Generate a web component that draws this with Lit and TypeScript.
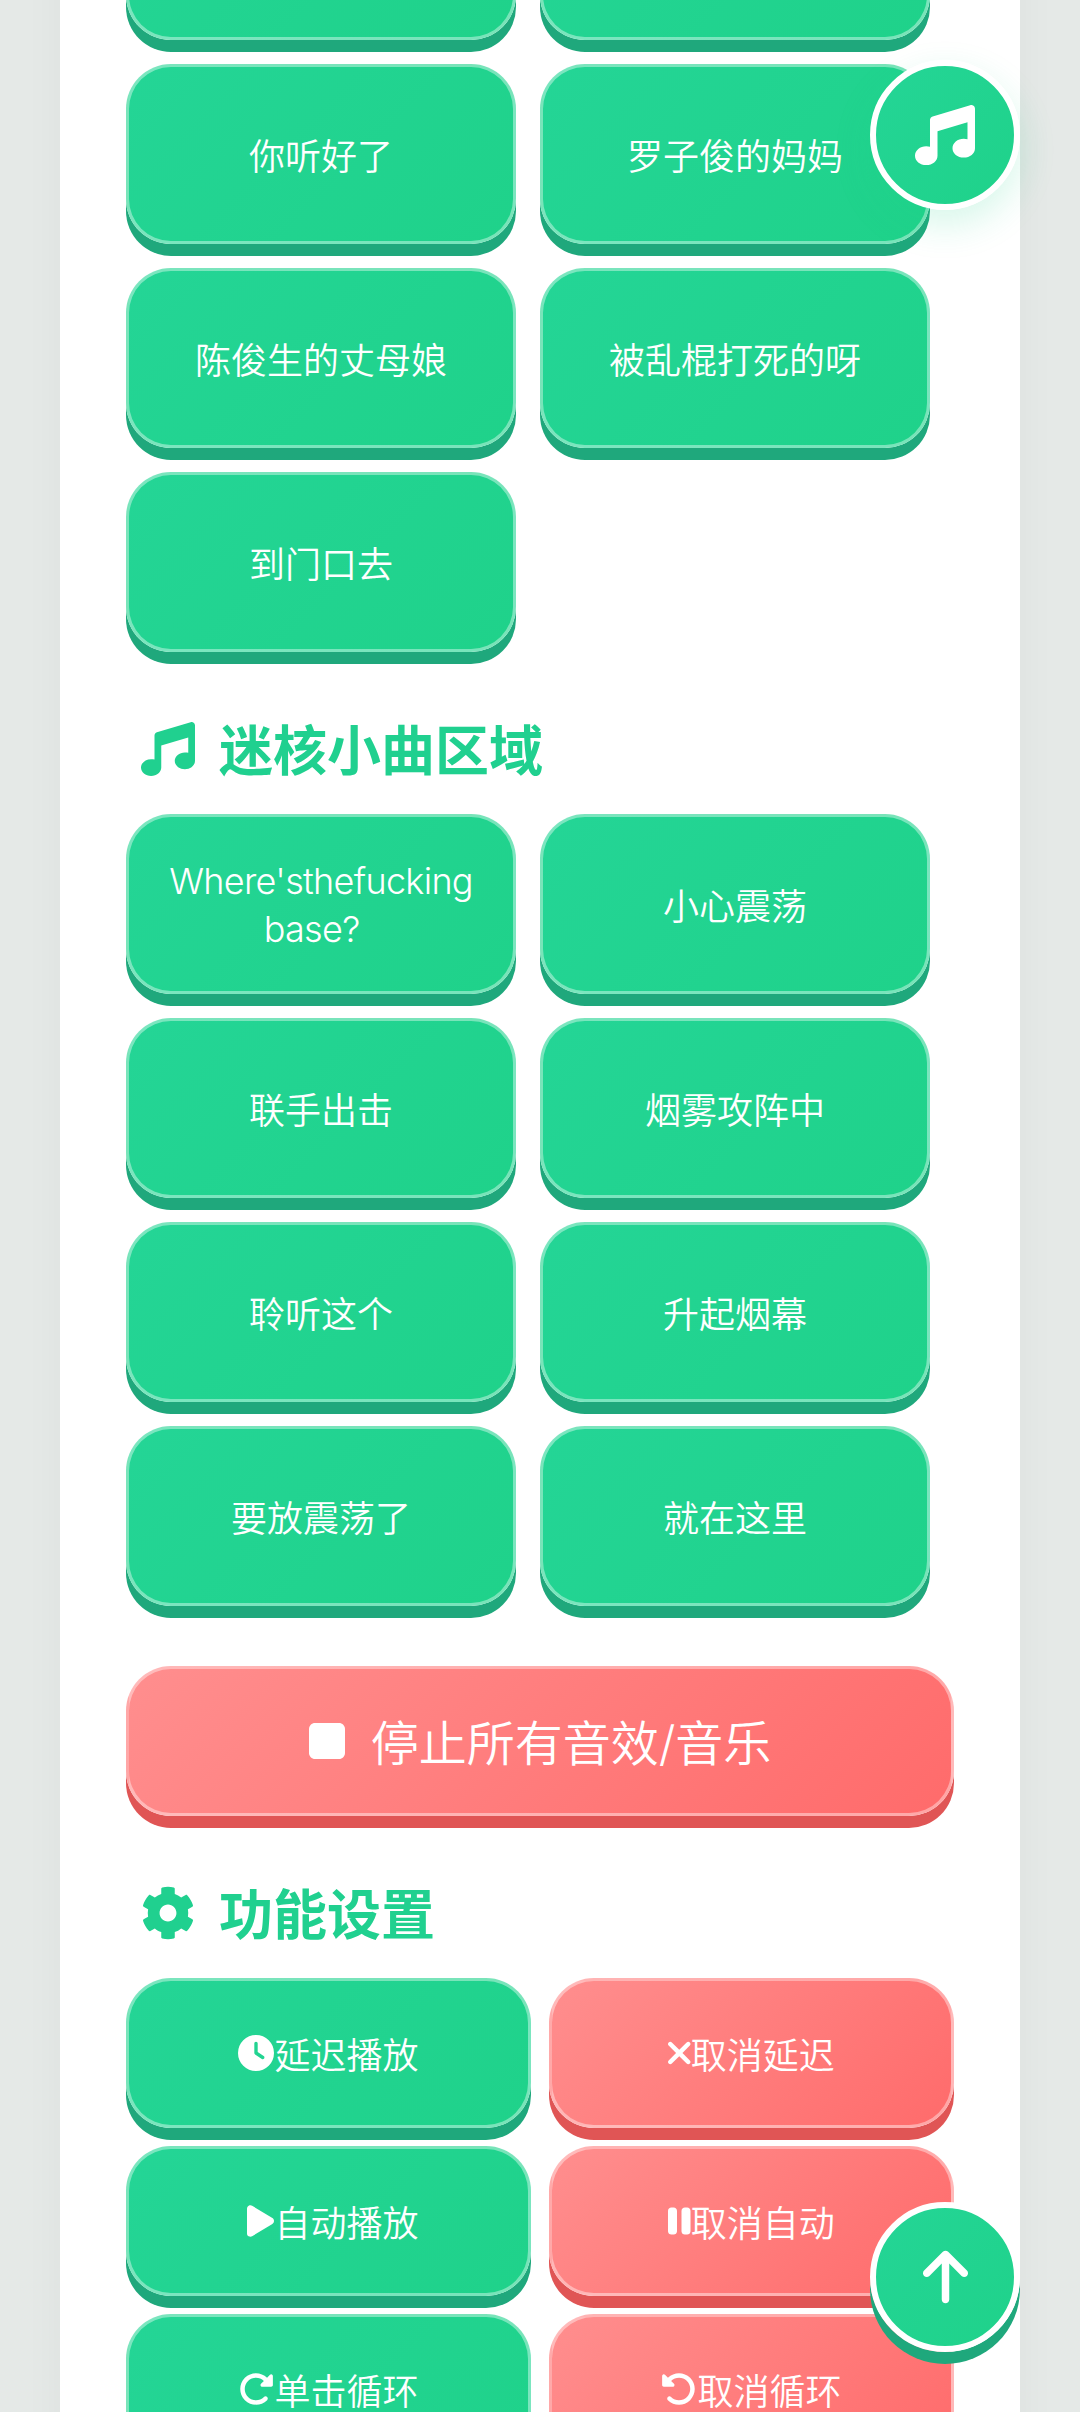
import { LitElement, html, css, svg } from "lit";
import { customElement } from "lit/decorators.js";

// font awesome 6 solid glyphs, [box width, path, box left]
const ICONS: Record<string, [number, string, number?]> = {
  music: [512, "M499.1 6.3c8.1 6 12.9 15.6 12.9 25.7v72V368c0 44.2-43 80-96 80s-96-35.8-96-80s43-80 96-80c11.2 0 22 1.6 32 4.6V147L192 223.8V432c0 44.2-43 80-96 80s-96-35.8-96-80s43-80 96-80c11.2 0 22 1.6 32 4.6V200 128c0-14.1 9.3-26.6 22.8-30.7l320-96c9.7-2.9 20.2-1.1 28.3 5z"],
  gear: [512, "M487.4 315.7l-42.6-24.6c4.3-23.2 4.3-47 0-70.2l42.6-24.6c4.9-2.8 7.1-8.6 5.5-14-11.1-35.6-30-67.8-54.7-94.6-3.8-4.1-10-5.1-14.8-2.3L380.8 110c-17.9-15.4-38.5-27.3-60.8-35.1V25.8c0-5.6-3.9-10.5-9.4-11.7-36.7-8.2-74.3-7.8-109.2 0-5.5 1.2-9.4 6.1-9.4 11.7V75c-22.2 7.9-42.8 19.8-60.8 35.1L88.7 85.5c-4.9-2.8-11-1.9-14.8 2.3-24.7 26.7-43.6 58.9-54.7 94.6-1.7 5.4.6 11.2 5.5 14L67.3 221c-4.3 23.2-4.3 47 0 70.2l-42.6 24.6c-4.9 2.8-7.1 8.6-5.5 14 11.1 35.6 30 67.8 54.7 94.6 3.8 4.1 10 5.1 14.8 2.3l42.6-24.6c17.9 15.4 38.5 27.3 60.8 35.1v49.2c0 5.6 3.9 10.5 9.4 11.7 36.7 8.2 74.3 7.8 109.2 0 5.5-1.2 9.4-6.1 9.4-11.7v-49.2c22.2-7.9 42.8-19.8 60.8-35.1l42.6 24.6c4.9 2.8 11 1.9 14.8-2.3 24.7-26.7 43.6-58.9 54.7-94.6 1.5-5.5-.7-11.3-5.6-14.1zM256 336c-44.1 0-80-35.9-80-80s35.9-80 80-80 80 35.9 80 80-35.9 80-80 80z"],
  stop: [384, "M0 128C0 92.7 28.7 64 64 64H320c35.3 0 64 28.7 64 64V384c0 35.3-28.7 64-64 64H64c-35.3 0-64-28.7-64-64V128z"],
  clock: [512, "M256 0a256 256 0 1 1 0 512A256 256 0 1 1 256 0zM232 120V256c0 8 4 15.5 10.7 20l96 64c11 7.4 25.9 4.4 33.3-6.7s4.4-25.9-6.7-33.3L280 243.2V120c0-13.3-10.7-24-24-24s-24 10.7-24 24z"],
  xmark: [320, "M310.6 150.6c12.5-12.5 12.5-32.8 0-45.3s-32.8-12.5-45.3 0L160 210.7 54.6 105.4c-12.5-12.5-32.8-12.5-45.3 0s-12.5 32.8 0 45.3L114.7 256 9.4 361.4c-12.5 12.5-12.5 32.8 0 45.3s32.8 12.5 45.3 0L160 301.3 265.4 406.6c12.5 12.5 32.8 12.5 45.3 0s12.5-32.8 0-45.3L205.3 256 310.6 150.6z"],
  play: [512, "M73 39c-14.8-9.1-33.4-9.4-48.5-.9S0 62.6 0 80V432c0 17.4 9.4 33.4 24.5 41.9s33.7 8.1 48.5-.9L361 297c14.3-8.7 23-24.2 23-41s-8.7-32.2-23-41L73 39z", -128],
  pause: [320, "M48 64C21.5 64 0 85.5 0 112V400c0 26.5 21.5 48 48 48H80c26.5 0 48-21.5 48-48V112c0-26.5-21.5-48-48-48H48zm192 0c-26.5 0-48 21.5-48 48V400c0 26.5 21.5 48 48 48h32c26.5 0 48-21.5 48-48V112c0-26.5-21.5-48-48-48H240z"],
  redo: [512, "M463.5 224H472c13.3 0 24-10.7 24-24V72c0-9.7-5.8-18.5-14.8-22.2s-19.3-1.7-26.2 5.2L413.4 96.6c-87.6-86.5-228.7-86.2-315.8 1c-87.5 87.5-87.5 229.3 0 316.8s229.3 87.5 316.8 0c12.5-12.5 12.5-32.8 0-45.3s-32.8-12.5-45.3 0c-62.5 62.5-163.8 62.5-226.3 0s-62.5-163.8 0-226.3c62.2-62.2 162.7-62.5 225.3-1L327 183c-6.9 6.9-8.9 17.2-5.2 26.2s12.5 14.8 22.2 14.8H463.5z"],
  undo: [512, "M48.5 224H40c-13.3 0-24-10.7-24-24V72c0-9.7 5.8-18.5 14.8-22.2s19.3-1.7 26.2 5.2L98.6 96.6c87.6-86.5 228.7-86.2 315.8 1c87.5 87.5 87.5 229.3 0 316.8s-229.3 87.5-316.8 0c-12.5-12.5-12.5-32.8 0-45.3s32.8-12.5 45.3 0c62.5 62.5 163.8 62.5 226.3 0s62.5-163.8 0-226.3c-62.2-62.2-162.7-62.5-225.3-1L185 183c6.9 6.9 8.9 17.2 5.2 26.2s-12.5 14.8-22.2 14.8H48.5z"],
  up: [384, "M214.6 41.4c-12.5-12.5-32.8-12.5-45.3 0l-160 160c-12.5 12.5-12.5 32.8 0 45.3s32.8 12.5 45.3 0L160 141.2V448c0 17.7 14.3 32 32 32s32-14.3 32-32V141.2L329.4 246.6c12.5 12.5 32.8 12.5 45.3 0s12.5-32.8 0-45.3l-160-160z"],
};

const icon = (name: string) => {
  const [w, d, x = 0] = ICONS[name];
  return html`<svg class="icon" viewBox="${x} 0 ${w} 512" style="width:${w / 512}em" fill="currentColor">${svg`<path d=${d}></path>`}</svg>`;
};

// the page is scrolled down, first row only shows its bottom edge
const SOUNDS = ["", "", "你听好了", "罗子俊的妈妈", "陈俊生的丈母娘", "被乱棍打死的呀", "到门口去"];
const SONGS = ["小心震荡", "联手出击", "烟雾攻阵中", "聆听这个", "升起烟幕", "要放震荡了", "就在这里"];
const SETTINGS: [string, string, boolean][] = [
  ["clock", "延迟播放", false],
  ["xmark", "取消延迟", true],
  ["play", "自动播放", false],
  ["pause", "取消自动", true],
  ["redo", "单击循环", false],
  ["undo", "取消循环", true],
];

@customElement("app-root")
export class AppRoot extends LitElement {
  static styles = css`
    :host {
      display: block;
      height: 2412px;
      overflow: hidden;
      background: #e5e9e7;
      font-family: Inter, "Noto Sans CJK SC", sans-serif;
    }
    .panel {
      margin: -140px 60px 0;
      padding: 0 66px 60px;
      background: #fff;
      box-shadow: 0 0 40px rgba(0, 40, 30, 0.04);
    }
    .icon {
      height: 1em;
      flex: none;
      display: block;
    }
    .grid {
      display: grid;
      grid-template-columns: 390px 390px;
      gap: 24px;
    }
    .settings {
      grid-template-columns: 405px 405px;
      gap: 18px;
    }
    .btn {
      display: flex;
      align-items: center;
      justify-content: center;
      box-sizing: border-box;
      height: 180px;
      padding: 0 24px;
      border: 3px solid rgba(255, 255, 255, 0.4);
      border-radius: 45px;
      color: #fff;
      font: inherit;
      font-size: 36px;
      font-weight: 350;
      line-height: 48px;
      text-align: center;
      background: linear-gradient(135deg, #24d596, #1fd28a);
      box-shadow: 0 12px 0 #1fa87c;
    }
    .label {
      padding-top: 6px;
    }
    .latin {
      padding-top: 2px;
      font-weight: 300;
      letter-spacing: -0.7px;
    }
    .settings .btn {
      height: 150px;
    }
    .red {
      background: linear-gradient(135deg, #ff8e8e, #ff6b6b);
      box-shadow: 0 12px 0 #e05555;
    }
    .stop {
      width: 100%;
      height: 150px;
      margin-top: 60px;
      gap: 26px;
      font-size: 48px;
    }
    h2 {
      display: flex;
      align-items: center;
      gap: 24px;
      height: 72px;
      margin: 60px 0 30px;
      padding-left: 15px;
      color: #20d08f;
      font-size: 54px;
      line-height: 72px;
      font-weight: 700;
    }
    h2 .icon {
      margin-top: 2px;
    }
    h2 .label {
      padding-top: 8px;
    }
    .fab {
      position: fixed;
      right: 60px;
      display: flex;
      align-items: center;
      justify-content: center;
      box-sizing: border-box;
      width: 150px;
      height: 150px;
      border: 6px solid #fff;
      border-radius: 50%;
      color: #fff;
      font-size: 60px;
      background: linear-gradient(135deg, #24d596, #1fd28a);
    }
    .fab.music {
      top: 60px;
      box-shadow: 0 15px 36px rgba(32, 210, 140, 0.18);
    }
    .fab.top {
      bottom: 60px;
      box-shadow: 0 12px 0 #1fa87c;
    }
  `;

  render() {
    return html`
      <div class="panel">
        <div class="grid">
          ${SOUNDS.map((s) => html`<button class="btn"><span class="label">${s}</span></button>`)}
        </div>

        <h2>${icon("music")}<span class="label">迷核小曲区域</span></h2>
        <div class="grid">
          <button class="btn"><span class="label latin">Where's\u200bthe\u200bfucking base?\u00a0\u00a0</span></button>
          ${SONGS.map((s) => html`<button class="btn"><span class="label">${s}</span></button>`)}
        </div>

        <button class="btn red stop">${icon("stop")}<span class="label">停止所有音效/音乐</span></button>

        <h2>${icon("gear")}<span class="label">功能设置</span></h2>
        <div class="grid settings">
          ${SETTINGS.map(
            ([ic, label, red]) =>
              html`<button class="btn ${red ? "red" : ""}">${icon(ic)}<span class="label">${label}</span></button>`
          )}
        </div>
      </div>

      <div class="fab music">${icon("music")}</div>
      <div class="fab top">${icon("up")}</div>
    `;
  }
}
